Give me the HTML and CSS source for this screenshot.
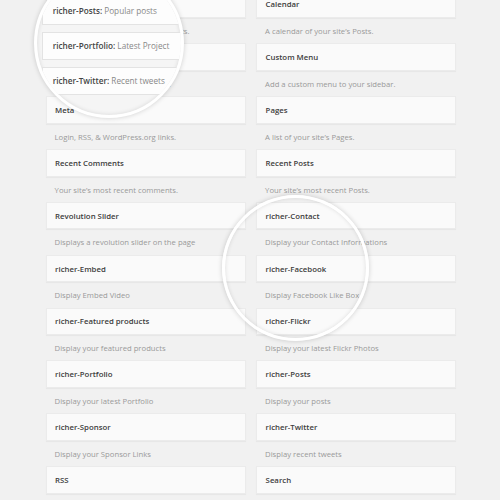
FILE: index.html
```html
<!DOCTYPE html>
<html>
<head>
<meta charset="utf-8">
<link rel="stylesheet" href="styles.css">
</head>
<body>
<div class="page">
  <div class="widgets">
    <div class="widget"><div class="card">Archives</div><div class="desc">A monthly archive of your site’s Posts.</div></div>
    <div class="widget"><div class="card">Calendar</div><div class="desc">A calendar of your site’s Posts.</div></div>
    <div class="widget"><div class="card">Categories</div><div class="desc">A list or dropdown of categories.</div></div>
    <div class="widget"><div class="card">Custom Menu</div><div class="desc">Add a custom menu to your sidebar.</div></div>
    <div class="widget"><div class="card">Meta</div><div class="desc">Login, RSS, &amp; WordPress.org links.</div></div>
    <div class="widget"><div class="card">Pages</div><div class="desc">A list of your site’s Pages.</div></div>
    <div class="widget"><div class="card">Recent Comments</div><div class="desc">Your site’s most recent comments.</div></div>
    <div class="widget"><div class="card">Recent Posts</div><div class="desc">Your site’s most recent Posts.</div></div>
    <div class="widget"><div class="card">Revolution Slider</div><div class="desc">Displays a revolution slider on the page</div></div>
    <div class="widget"><div class="card">richer-Contact</div><div class="desc">Display your Contact Informations</div></div>
    <div class="widget"><div class="card">richer-Embed</div><div class="desc">Display Embed Video</div></div>
    <div class="widget"><div class="card">richer-Facebook</div><div class="desc">Display Facebook Like Box</div></div>
    <div class="widget"><div class="card">richer-Featured products</div><div class="desc">Display your featured products</div></div>
    <div class="widget"><div class="card">richer-Flickr</div><div class="desc">Display your latest Flickr Photos</div></div>
    <div class="widget"><div class="card">richer-Portfolio</div><div class="desc">Display your latest Portfolio</div></div>
    <div class="widget"><div class="card">richer-Posts</div><div class="desc">Display your posts</div></div>
    <div class="widget"><div class="card">richer-Sponsor</div><div class="desc">Display your Sponsor Links</div></div>
    <div class="widget"><div class="card">richer-Twitter</div><div class="desc">Display recent tweets</div></div>
    <div class="widget"><div class="card">RSS</div></div>
    <div class="widget"><div class="card">Search</div></div>
  </div>

  <div class="lens lens-sidebar">
    <div class="lens-list">
      <div class="lens-card"><b>richer-Posts:</b> Popular posts</div>
      <div class="lens-card"><b>richer-Portfolio:</b> Latest Project</div>
      <div class="lens-card"><b>richer-Twitter:</b> Recent tweets</div>
    </div>
  </div>
  <div class="lens lens-widgets"></div>
</div>
</body>
</html>
```
FILE: styles.css
```css
html, body {
  margin: 0;
  padding: 0;
  background: #f1f1f1;
}
body {
  font-family: "Open Sans", "DejaVu Sans", sans-serif;
}
.page {
  position: relative;
  width: 500px;
  height: 500px;
  overflow: hidden;
}
.widgets {
  display: grid;
  grid-template-columns: 200px 199.5px;
  column-gap: 10.5px;
  padding-left: 45.6px;
  margin-top: -9.5px;
}
.widget {
  height: 52.85px;
}
.card {
  box-sizing: border-box;
  height: 27.6px;
  background: #fafafa;
  border: 1px solid #ebebeb;
  box-shadow: 0 1px 1px rgba(0, 0, 0, 0.04);
  display: flex;
  align-items: center;
  padding-left: 8.5px;
  font-size: 7.8px;
  font-weight: 600;
  color: #3c3c3c;
  white-space: nowrap;
}
.desc {
  padding: 2px 0 0 9px;
  line-height: 23px;
  font-size: 7.7px;
  color: #999;
  white-space: nowrap;
}
.lens {
  position: absolute;
  box-sizing: border-box;
  border-radius: 50%;
  border: 3px solid #fff;
  box-shadow: 0 0 5px rgba(0, 0, 0, 0.18), inset 0 0 4px rgba(0, 0, 0, 0.12);
  overflow: hidden;
}
.lens-sidebar {
  left: 34px;
  top: -32px;
  width: 150px;
  height: 150px;
  background: #f5f5f5;
}
.lens-widgets {
  left: 222px;
  top: 195px;
  width: 147px;
  height: 146px;
}
.lens-list {
  margin: 25.7px 0 0 4.7px;
  display: flex;
  flex-direction: column;
  gap: 7px;
}
.lens-card {
  box-sizing: border-box;
  width: 200px;
  height: 28px;
  background: #fdfdfd;
  border: 1px solid #e3e3e3;
  display: flex;
  align-items: center;
  padding-left: 10px;
  font-size: 8.2px;
  color: #888;
  white-space: pre;
}
.lens-card b {
  font-weight: 600;
  color: #444;
}
```
